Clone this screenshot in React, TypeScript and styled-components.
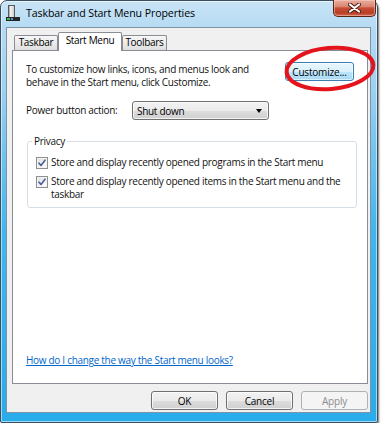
import React from "react";
import styled, { createGlobalStyle, css } from "styled-components";

const GlobalStyle = createGlobalStyle`
  html, body { margin: 0; padding: 0; background: #ffffff; }
  body {
    font-family: "Open Sans", "Noto Sans", "DejaVu Sans", sans-serif;
    color: #111;
    -webkit-font-smoothing: antialiased;
  }
`;

const FONT = `font-size: 10px; letter-spacing: -0.3px; line-height: 13px; white-space: nowrap;`;

const Window = styled.div`
  position: relative;
  box-sizing: border-box;
  width: 378px;
  height: 423px;
  display: flex;
  flex-direction: column;
  padding: 0 0 9px 0;
  border: 1px solid #3b4f62;
  border-radius: 7px 7px 2px 2px;
  background: linear-gradient(
    180deg,
    #c9e4f6 0%,
    #b3daf3 7%,
    #9fd2f1 20%,
    #6cc2ef 38%,
    #3fb6ee 55%,
    #29acea 100%
  );
  box-shadow: 1px 2px 2px rgba(0, 0, 0, 0.55),
    inset 0 0 0 1px rgba(255, 255, 255, 0.55);
`;

const TitleBar = styled.div`
  display: flex;
  align-items: flex-start;
  height: 26px;
  padding: 0 1px 0 5px;
`;

const AppIcon = styled.svg`
  flex: none;
  margin-top: 4px;
  margin-right: 6px;
`;

const Title = styled.div`
  margin-top: 5px;
  font-size: 10.6px;
  line-height: 14px;
  letter-spacing: -0.1px;
  color: #000;
`;

const CloseButton = styled.div`
  margin-left: auto;
  box-sizing: border-box;
  width: 43px;
  height: 17px;
  margin-top: -1px;
  display: flex;
  align-items: center;
  justify-content: center;
  border: 1px solid #5a2418;
  border-top: none;
  border-radius: 0 0 5px 5px;
  background: linear-gradient(
    180deg,
    #e9ad9e 0%,
    #dc8873 40%,
    #c74e36 50%,
    #b83e26 80%,
    #d2684c 100%
  );
  box-shadow: inset 0 0 0 1px rgba(255, 220, 210, 0.45);
`;

const Client = styled.div`
  flex: 1;
  display: flex;
  flex-direction: column;
  margin: 0 6px 0 5px;
  padding: 4px 2px 2px 5px;
  background: #f0f0f0;
  border: 1px solid #7f93a7;
`;

const TabStrip = styled.div`
  display: flex;
  align-items: flex-end;
  height: 18px;
  padding-left: 2px;
`;

const Tab = styled.div<{ $w: number; $active?: boolean }>`
  box-sizing: border-box;
  width: ${(p) => p.$w}px;
  height: 15px;
  border: 1px solid #898c95;
  border-bottom: none;
  border-radius: 2px 2px 0 0;
  background: linear-gradient(180deg, #f7f7f7 0%, #ebebeb 50%, #dedede 100%);
  font-size: 10px;
  letter-spacing: -0.3px;
  line-height: 13px;
  text-align: center;
  color: #000;
  ${(p) =>
    p.$active &&
    css`
      position: relative;
      z-index: 1;
      height: 19px;
      margin-bottom: -1px;
      background: #fff;
      line-height: 15px;
    `}
`;

const TabPanel = styled.div`
  flex: 1;
  display: flex;
  flex-direction: column;
  background: #fff;
  border: 1px solid #898c95;
  padding: 12px 10px 16px 13px;
`;

const IntroRow = styled.div`
  display: flex;
  justify-content: space-between;
  align-items: flex-start;
`;

const Text = styled.div`
  ${FONT}
  color: #111;
`;

const PushButton = styled.div<{ $variant?: "normal" | "hot" | "disabled"; $w?: number }>`
  box-sizing: border-box;
  flex: none;
  width: ${(p) => p.$w ?? 67}px;
  height: 19px;
  display: flex;
  align-items: center;
  justify-content: center;
  border: 1px solid #707070;
  border-radius: 3px;
  background: linear-gradient(180deg, #f2f2f2 0%, #ebebeb 50%, #dddddd 51%, #cfcfcf 100%);
  box-shadow: inset 0 0 0 1px rgba(255, 255, 255, 0.75);
  font-size: 10px;
  letter-spacing: -0.2px;
  color: #000;
  ${(p) =>
    p.$variant === "hot" &&
    css`
      border-color: #3c7fb1;
      background: linear-gradient(180deg, #eaf6fd 0%, #d9f0fc 50%, #bee6fd 51%, #a7d9f5 100%);
      box-shadow: inset 0 0 0 1px rgba(255, 255, 255, 0.6);
    `}
  ${(p) =>
    p.$variant === "disabled" &&
    css`
      border-color: #adb2b5;
      background: #f4f4f4;
      box-shadow: none;
      color: #8d8d8d;
    `}
`;

const CustomizeButton = styled(PushButton)`
  margin-top: -1px;
  margin-right: 3px;
`;

const PowerRow = styled.div`
  display: flex;
  align-items: center;
  margin-top: 12px;
`;

const Label = styled.div`
  ${FONT}
  width: 106px;
`;

const Select = styled.div`
  box-sizing: border-box;
  width: 137px;
  height: 19px;
  display: flex;
  align-items: center;
  padding: 0 6px 0 4px;
  border: 1px solid #707070;
  border-radius: 3px;
  background: linear-gradient(180deg, #f2f2f2 0%, #ebebeb 50%, #dddddd 51%, #cfcfcf 100%);
  box-shadow: inset 0 0 0 1px rgba(255, 255, 255, 0.75);
  font-size: 10px;
  letter-spacing: -0.3px;
  color: #000;
`;

const Arrow = styled.span`
  margin-left: auto;
  width: 0;
  height: 0;
  border-left: 3.5px solid transparent;
  border-right: 3.5px solid transparent;
  border-top: 4px solid #000;
`;

const Group = styled.fieldset`
  margin: 15px 0 0 1px;
  padding: 8px 8px 6px 8px;
  border: 1px solid #d5dfe5;
  border-radius: 3px;
  min-width: 0;
`;

const Legend = styled.legend`
  ${FONT}
  padding: 0 2px;
  margin-left: -4px;
  color: #111;
`;

const CheckRow = styled.div<{ $first?: boolean }>`
  display: flex;
  align-items: flex-start;
  gap: 3px;
  margin-top: ${(p) => (p.$first ? 0 : 6)}px;
`;

const CheckBox = styled.div`
  box-sizing: border-box;
  flex: none;
  width: 12px;
  height: 12px;
  margin-top: 1px;
  border: 1px solid #8f8f8f;
  background: linear-gradient(135deg, #dcdcdc 0%, #f4f4f4 60%, #ffffff 100%);
  box-shadow: inset 0 0 0 1px #f4f4f4;
  display: flex;
  align-items: center;
  justify-content: center;
`;

const HelpLink = styled.a`
  margin-top: auto;
  ${FONT}
  color: #0066cc;
  text-decoration: underline;
  cursor: pointer;
`;

const ButtonRow = styled.div`
  display: flex;
  justify-content: flex-end;
  gap: 8px;
  margin-top: 7px;
`;

const Highlight = styled.svg`
  position: absolute;
  left: 278px;
  top: 39px;
  pointer-events: none;
`;

function Check() {
  return (
    <svg width="8" height="8" viewBox="0 0 8 8">
      <path d="M1 4.2 L3 6.4 L7 1.2" fill="none" stroke="#4a5f97" strokeWidth="1.6" strokeLinecap="round" strokeLinejoin="round" />
    </svg>
  );
}

export default function App() {
  return (
    <>
      <GlobalStyle />
      <Window>
        <TitleBar>
          <AppIcon width="14" height="16" viewBox="0 0 14 16">
            <defs>
              <linearGradient id="tower" x1="0" x2="1" y1="0" y2="0">
                <stop offset="0" stopColor="#7a7a7a" />
                <stop offset="0.35" stopColor="#f4f4f4" />
                <stop offset="1" stopColor="#c8c8c8" />
              </linearGradient>
            </defs>
            <rect x="2.5" y="0.5" width="6" height="12" fill="url(#tower)" stroke="#5a5a5a" />
            <rect x="0" y="12" width="14" height="4" fill="#262626" />
            <rect x="1" y="13" width="3" height="2" fill="#3fbf4f" />
            <rect x="5" y="13" width="2" height="2" fill="#4a8fe0" />
          </AppIcon>
          <Title>Taskbar and Start Menu Properties</Title>
          <CloseButton>
            <svg width="13" height="10" viewBox="0 0 13 10">
              <path d="M2 1.5 L11 8.5 M11 1.5 L2 8.5" stroke="#4a1a10" strokeWidth="4" strokeLinecap="round" />
              <path d="M2 1.5 L11 8.5 M11 1.5 L2 8.5" stroke="#ffffff" strokeWidth="2.2" strokeLinecap="round" />
            </svg>
          </CloseButton>
        </TitleBar>
        <Client>
          <TabStrip>
            <Tab $w={44}>Taskbar</Tab>
            <Tab $w={64} $active>Start Menu</Tab>
            <Tab $w={45}>Toolbars</Tab>
          </TabStrip>
          <TabPanel>
            <IntroRow>
              <Text>
                To customize how links, icons, and menus look and
                <br />
                behave in the Start menu, click Customize.
              </Text>
              <CustomizeButton $variant="hot" $w={69}>Customize...</CustomizeButton>
            </IntroRow>
            <PowerRow>
              <Label>Power button action:</Label>
              <Select>
                Shut down
                <Arrow />
              </Select>
            </PowerRow>
            <Group>
              <Legend>Privacy</Legend>
              <CheckRow $first>
                <CheckBox>
                  <Check />
                </CheckBox>
                <Text>Store and display recently opened programs in the Start menu</Text>
              </CheckRow>
              <CheckRow>
                <CheckBox>
                  <Check />
                </CheckBox>
                <Text>
                  Store and display recently opened items in the Start menu and the
                  <br />
                  taskbar
                </Text>
              </CheckRow>
            </Group>
            <HelpLink>How do I change the way the Start menu looks?</HelpLink>
          </TabPanel>
          <ButtonRow>
            <PushButton>OK</PushButton>
            <PushButton>Cancel</PushButton>
            <PushButton $variant="disabled">Apply</PushButton>
          </ButtonRow>
        </Client>
        <Highlight width="100" height="58" viewBox="0 0 100 58">
          <ellipse cx="51" cy="28.5" rx="43.5" ry="20.5" fill="none" stroke="#e3141c" strokeWidth="4" transform="rotate(-5 51 28.5)" />
        </Highlight>
      </Window>
    </>
  );
}
